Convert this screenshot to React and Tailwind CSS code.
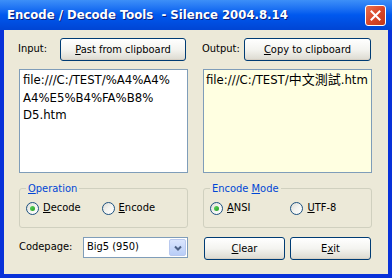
import React, { useState } from 'react';

const FONT = { fontFamily: '"DejaVu Sans Condensed", "DejaVu Sans", sans-serif' };

const XpButton = ({ children, className = '' }) => (
  <button
    type="button"
    className={`h-[23px] rounded-[3px] border border-[#003c74] bg-gradient-to-b from-[#ffffff] via-[#f4f4f0] to-[#dcdad0] text-[11px] text-black leading-none shadow-[inset_0_-1px_0_#d6d0c5] ${className}`}
  >
    {children}
  </button>
);

const Radio = ({ checked, onClick, children }) => (
  <label className="flex items-center gap-[4px] cursor-default" onClick={onClick}>
    <span className="w-[13px] h-[13px] rounded-full border border-[#1c5180] bg-gradient-to-br from-[#dcdcd6] via-[#f4f4f0] to-[#ffffff] flex items-center justify-center">
      {checked && (
        <span className="w-[5px] h-[5px] rounded-full bg-gradient-to-br from-[#5ed45e] to-[#21a121]"></span>
      )}
    </span>
    <span className="text-[11px] text-black">{children}</span>
  </label>
);

const GroupBox = ({ title, children }) => (
  <fieldset className="h-[46px] rounded-[3px] border border-[#d0d0bf] px-[6px] pb-[6px] m-0">
    <legend className="px-[2px] text-[11px] text-[#0046d5] leading-[13px]">{title}</legend>
    <div className="flex items-center h-full pt-[1px]">{children}</div>
  </fieldset>
);

const App = () => {
  const [op, setOp] = useState('decode');
  const [mode, setMode] = useState('ansi');

  return (
    <div className="w-[392px] h-[278px] flex flex-col bg-[#0831d9] overflow-hidden" style={FONT}>
      {/* Title bar */}
      <div className="h-[30px] shrink-0 flex items-center justify-between pl-[7px] pr-[6px] bg-gradient-to-b from-[#3d8ff8] via-[#0058ee] to-[#0045d4]">
        <span className="text-white text-[13px] font-bold whitespace-pre [text-shadow:1px_1px_0_#0a1e7a]">
          Encode / Decode Tools  - Silence 2004.8.14
        </span>
        <span className="w-[21px] h-[21px] rounded-[3px] border border-white bg-gradient-to-br from-[#e8714f] via-[#d9472a] to-[#c23818] flex items-center justify-center">
          <svg width="11" height="11" viewBox="0 0 11 11">
            <path d="M1.5 1.5 L9.5 9.5 M9.5 1.5 L1.5 9.5" stroke="white" strokeWidth="2" strokeLinecap="square" />
          </svg>
        </span>
      </div>

      {/* Body */}
      <div className="flex-1 mx-[4px] mb-[4px] bg-[#ece9d8] pl-[15px] pr-[16px] pt-[8px] grid grid-cols-2 gap-x-[15px]">
        {/* Left column */}
        <div className="flex flex-col">
          <div className="flex items-center justify-between pr-[2px]">
            <span className="text-[11px] text-black -ml-[1px]">Input:</span>
            <XpButton className="w-[126px]"><u>P</u>ast from clipboard</XpButton>
          </div>
          <div className="mt-[8px] h-[104px] border border-[#7f9db9] bg-white px-[3px] pt-[1px] text-[13px] leading-[17.5px] text-black">
            <div>file:///C:/TEST/%A4%A4%</div>
            <div>A4%E5%B4%FA%B8%</div>
            <div>D5.htm</div>
          </div>
          <div className="mt-[9px]">
            <GroupBox title={<><u>O</u>peration</>}>
              <div className="flex items-center">
                <Radio checked={op === 'decode'} onClick={() => setOp('decode')}><u>D</u>ecode</Radio>
                <div className="ml-[21px]">
                  <Radio checked={op === 'encode'} onClick={() => setOp('encode')}><u>E</u>ncode</Radio>
                </div>
              </div>
            </GroupBox>
          </div>
          <div className="mt-[9px] flex items-center justify-between">
            <span className="text-[11px] text-black">Codepage:</span>
            <div className="w-[105px] h-[21px] border border-[#7f9db9] bg-white flex items-center justify-between pl-[3px] pr-[1px]">
              <span className="text-[11px] text-black">Big5 (950)</span>
              <span className="w-[17px] h-[17px] rounded-[2px] border border-[#b9c9ef] bg-gradient-to-b from-[#dbe6fd] to-[#b8cdf7] flex items-center justify-center">
                <svg width="8" height="6" viewBox="0 0 8 6">
                  <path d="M1 1.5 L4 4.5 L7 1.5" stroke="#4d6185" strokeWidth="2" fill="none" />
                </svg>
              </span>
            </div>
          </div>
        </div>

        {/* Right column */}
        <div className="flex flex-col">
          <div className="flex items-center justify-between pr-[1px]">
            <span className="text-[11px] text-black -ml-[1px]">Output:</span>
            <XpButton className="w-[127px]"><u>C</u>opy to clipboard</XpButton>
          </div>
          <div className="mt-[8px] h-[104px] border border-[#7f9db9] bg-[#ffffe1] px-[2px] pt-[1px] text-[13px] leading-[17.5px] text-black" style={{ fontFamily: '"DejaVu Sans Condensed", "DejaVu Sans", "Noto Sans CJK TC", sans-serif' }}>
            file:///C:/TEST/中文測試.htm
          </div>
          <div className="mt-[9px]">
            <GroupBox title={<>Encode <u>M</u>ode</>}>
              <div className="flex items-center">
                <Radio checked={mode === 'ansi'} onClick={() => setMode('ansi')}><u>A</u>NSI</Radio>
                <div className="ml-[40px]">
                  <Radio checked={mode === 'utf8'} onClick={() => setMode('utf8')}><u>U</u>TF-8</Radio>
                </div>
              </div>
            </GroupBox>
          </div>
          <div className="mt-[9px] flex items-center gap-[5px] pl-[1px] pr-[1px]">
            <XpButton className="flex-1"><u>C</u>lear</XpButton>
            <XpButton className="flex-1">E<u>x</u>it</XpButton>
          </div>
        </div>
      </div>
    </div>
  );
};

export default App;
